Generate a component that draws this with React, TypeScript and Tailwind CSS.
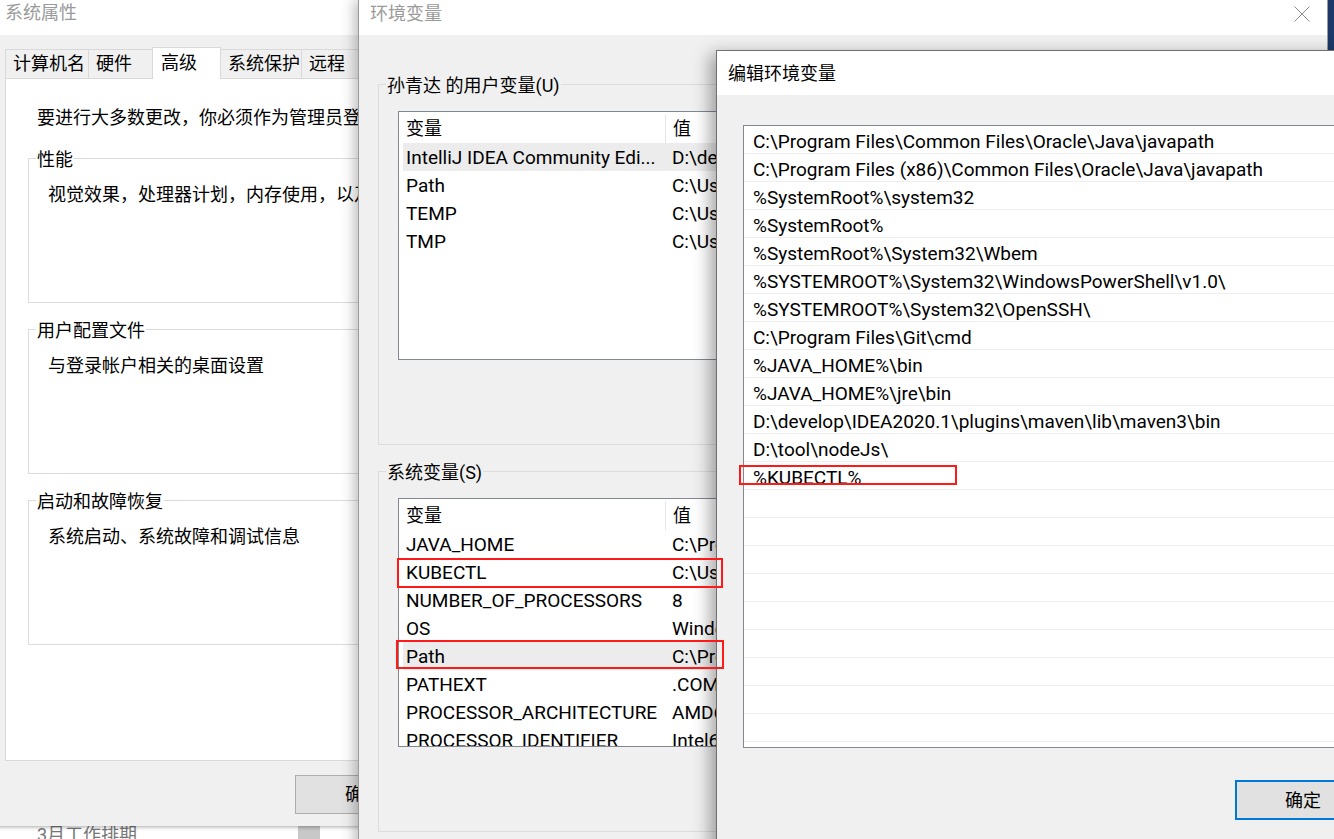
import React from 'react';

type VarRow = { name: string; value: string; selected?: boolean };

const userVars: VarRow[] = [
  { name: 'IntelliJ IDEA Community Edi...', value: 'D:\\develop\\IntelliJ IDEA Community Edition 2020.1\\bin;', selected: true },
  { name: 'Path', value: 'C:\\Users\\孙青达\\AppData\\Local\\Microsoft\\WindowsApps;' },
  { name: 'TEMP', value: 'C:\\Users\\孙青达\\AppData\\Local\\Temp' },
  { name: 'TMP', value: 'C:\\Users\\孙青达\\AppData\\Local\\Temp' },
];

const systemVars: VarRow[] = [
  { name: 'JAVA_HOME', value: 'C:\\Program Files\\Java\\jdk1.8.0_231' },
  { name: 'KUBECTL', value: 'C:\\Users\\孙青达\\kubectl' },
  { name: 'NUMBER_OF_PROCESSORS', value: '8' },
  { name: 'OS', value: 'Windows_NT' },
  { name: 'Path', value: 'C:\\Program Files\\Common Files\\Oracle\\Java\\javapath;', selected: true },
  { name: 'PATHEXT', value: '.COM;.EXE;.BAT;.CMD;.VBS;.VBE;.JS;.JSE;.WSF;.WSH;.MSC' },
  { name: 'PROCESSOR_ARCHITECTURE', value: 'AMD64' },
  { name: 'PROCESSOR_IDENTIFIER', value: 'Intel64 Family 6 Model 142 Stepping 10, GenuineIntel' },
];

const pathEntries = [
  'C:\\Program Files\\Common Files\\Oracle\\Java\\javapath',
  'C:\\Program Files (x86)\\Common Files\\Oracle\\Java\\javapath',
  '%SystemRoot%\\system32',
  '%SystemRoot%',
  '%SystemRoot%\\System32\\Wbem',
  '%SYSTEMROOT%\\System32\\WindowsPowerShell\\v1.0\\',
  '%SYSTEMROOT%\\System32\\OpenSSH\\',
  'C:\\Program Files\\Git\\cmd',
  '%JAVA_HOME%\\bin',
  '%JAVA_HOME%\\jre\\bin',
  'D:\\develop\\IDEA2020.1\\plugins\\maven\\lib\\maven3\\bin',
  'D:\\tool\\nodeJs\\',
  '%KUBECTL%',
];

const tabs = [
  { label: '计算机名', w: 'w-[84px]' },
  { label: '硬件', w: 'w-[65px]' },
  { label: '高级', w: 'w-[69px]', active: true },
  { label: '系统保护', w: 'w-[82px]' },
  { label: '远程', w: 'w-[60px]' },
];

// group box with the caption sitting on the top border
const GroupBox: React.FC<{ label: string; bg: string; className?: string; children?: React.ReactNode }> = ({
  label,
  bg,
  className,
  children,
}) => (
  <div className={`relative border border-[#dcdcdc] ${className ?? ''}`}>
    <span className={`absolute left-[7px] top-[-11px] px-[1px] leading-[24px] ${bg}`}>{label}</span>
    {children}
  </div>
);

const VarList: React.FC<{ rows: VarRow[] }> = ({ rows }) => (
  <div className="h-[249px] w-[700px] overflow-hidden border border-[#828790] bg-white">
    <div className="flex h-[31px] items-center pt-[2px] leading-[24px]">
      <div className="w-[266px] shrink-0 pl-[7px]">变量</div>
      <div className="h-[28px] w-px shrink-0 bg-[#e5e5e5]" />
      <div className="pl-[7px]">值</div>
    </div>
    {rows.map((r) => (
      <div
        key={r.name}
        className={`ml-[4px] flex h-[28px] items-center whitespace-nowrap pt-[2px] text-[19px] leading-[26px] ${r.selected ? 'bg-[#ececec]' : ''}`}
      >
        <div className="w-[263px] shrink-0 overflow-hidden pl-[3px]">{r.name}</div>
        <div className="shrink-0 pl-[6px]">{r.value}</div>
      </div>
    ))}
  </div>
);

const SystemProperties: React.FC = () => (
  <div className="absolute left-[-6px] top-0 h-[826px] w-[620px] bg-[#f0f0f0] shadow-[0_1px_4px_rgba(0,0,0,0.35)]">
    <div className="h-[35px] bg-white pl-[11px] pt-px leading-[24px] text-[#9a9a9a]">系统属性</div>
    <div className="mt-[11px] flex h-[32px] items-end pl-[12px]">
      {tabs.map((t) =>
        t.active ? (
          <div
            key={t.label}
            className={`relative z-10 -mb-px -ml-px h-[32px] ${t.w} border border-b-0 border-[#d9d9d9] bg-white pl-[8px] pt-[3px] leading-[24px]`}
          >
            {t.label}
          </div>
        ) : (
          <div
            key={t.label}
            className={`-ml-px h-[29px] ${t.w} border border-b-0 border-[#d9d9d9] bg-[#f0f0f0] pl-[7px] pt-[2px] leading-[24px]`}
          >
            {t.label}
          </div>
        )
      )}
    </div>
    <div className="ml-[11px] mr-[11px] h-[683px] border border-[#d9d9d9] bg-white pl-[22px] pr-[22px] pt-[27px]">
      <div className="pl-[9px] leading-[24px] whitespace-nowrap">要进行大多数更改，你必须作为管理员登录。</div>
      <GroupBox label="性能" bg="bg-white" className="mt-[28px] h-[145px]">
        <div className="pl-[19px] pt-[24px] leading-[24px] whitespace-nowrap">视觉效果，处理器计划，内存使用，以及虚拟内存</div>
      </GroupBox>
      <GroupBox label="用户配置文件" bg="bg-white" className="mt-[26px] h-[145px]">
        <div className="pl-[19px] pt-[24px] leading-[24px]">与登录帐户相关的桌面设置</div>
      </GroupBox>
      <GroupBox label="启动和故障恢复" bg="bg-white" className="mt-[26px] h-[145px]">
        <div className="pl-[19px] pt-[24px] leading-[24px]">系统启动、系统故障和调试信息</div>
      </GroupBox>
    </div>
    <div className="mt-[14px] pl-[301px]">
      <div className="flex h-[39px] w-[136px] items-center justify-center border border-[#adadad] bg-[#e1e1e1]">确定</div>
    </div>
  </div>
);

const EnvironmentVariables: React.FC = () => (
  <div className="absolute left-[358px] top-0 h-[900px] w-[970px] border-l border-r border-[#9a9a9a] bg-[#f0f0f0] shadow-[-4px_0_12px_rgba(0,0,0,0.25)]">
    <div className="relative h-[35px] bg-white pl-[11px] pt-[2px] leading-[24px] text-[#9a9a9a]">
      环境变量
      <svg className="absolute right-[17px] top-[6px]" width="16" height="16" viewBox="0 0 16 16">
        <path d="M0.5 0.5L15.5 15.5M15.5 0.5L0.5 15.5" stroke="#8c8c8c" strokeWidth="1" />
      </svg>
    </div>
    <div className="px-[19px] pt-[49px]">
      <GroupBox label="孙青达 的用户变量(U)" bg="bg-[#f0f0f0]" className="h-[361px] px-[19px] pt-[26px]">
        <VarList rows={userVars} />
      </GroupBox>
      <GroupBox label="系统变量(S)" bg="bg-[#f0f0f0]" className="mt-[26px] h-[361px] px-[19px] pt-[26px]">
        <VarList rows={systemVars} />
      </GroupBox>
    </div>
  </div>
);

const EditVariable: React.FC = () => (
  <div className="absolute left-[716px] top-[50px] h-[820px] w-[682px] border border-[#6f6f6f] bg-[#f0f0f0] shadow-[-6px_4px_16px_rgba(0,0,0,0.35)]">
    <div className="flex h-[44px] items-center bg-white pl-[11px] text-black">编辑环境变量</div>
    <div className="px-[26px] pt-[30px]">
      <div className="h-[623px] overflow-hidden border border-[#828790] bg-white">
        {Array.from({ length: 24 }).map((_, i) => (
          <div
            key={i}
            className="h-[28px] border-b border-[#efefef] pl-[9px] pt-[2px] text-[19px] leading-[27px] whitespace-nowrap"
          >
            {pathEntries[i] ?? ''}
          </div>
        ))}
      </div>
      <div className="mt-[32px] flex justify-end">
        <div className="flex h-[40px] w-[136px] items-center justify-center border-2 border-[#0078d7] bg-[#e1e1e1]">
          确定
        </div>
      </div>
    </div>
  </div>
);

const App: React.FC = () => {
  return (
    <div className="relative h-[839px] w-[1334px] overflow-hidden bg-[#1d3b6c] font-['Roboto','Noto_Sans_CJK_SC',sans-serif] text-[18px] text-black">
      {/* whatever sits behind the dialogs at the bottom left */}
      <div className="absolute left-0 top-[790px] flex h-[49px] w-[360px] bg-white">
        <div className="pl-[37px] pt-[33px] leading-[24px] text-[#777]">3月工作排期</div>
        <div className="absolute left-[298px] top-0 h-[49px] w-[22px] bg-[#c8c8c8]" />
      </div>

      <SystemProperties />
      <EnvironmentVariables />
      <EditVariable />

      {/* red annotation boxes */}
      <div className="absolute left-[397px] top-[558px] h-[30px] w-[326px] border-2 border-[#ff1a1a]" />
      <div className="absolute left-[396px] top-[640px] h-[29px] w-[328px] border-2 border-[#ff1a1a]" />
      <div className="absolute left-[739px] top-[465px] h-[20px] w-[218px] border-2 border-[#ff1a1a]" />
    </div>
  );
};

export default App;
